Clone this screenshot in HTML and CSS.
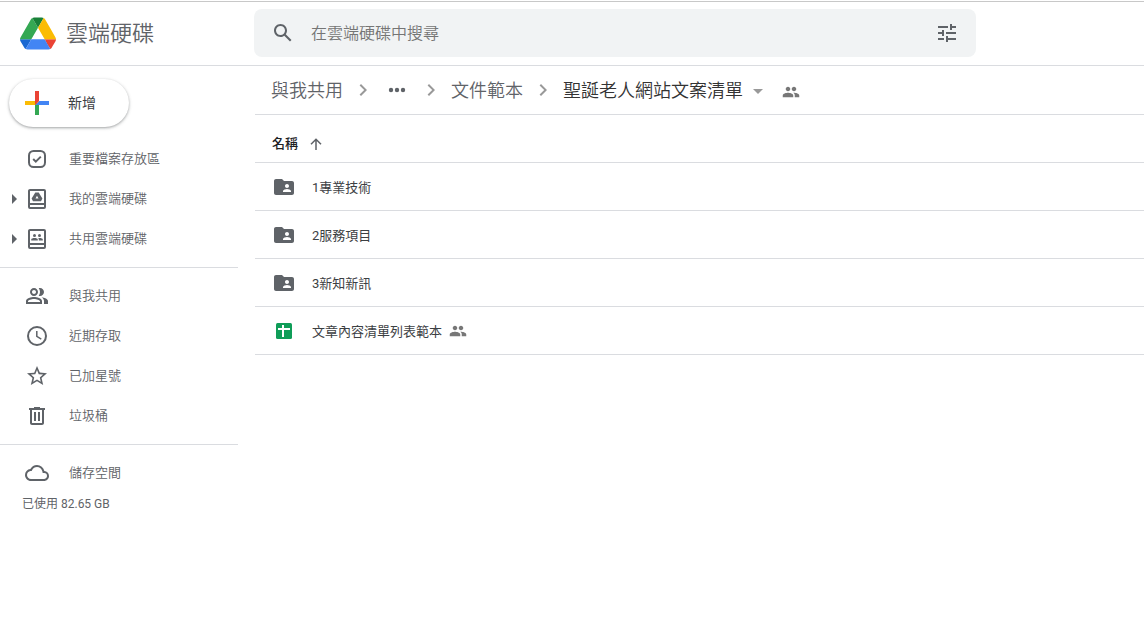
FILE: index.html
```html
<!DOCTYPE html>
<html lang="zh-Hant">
<head>
<meta charset="utf-8">
<meta name="viewport" content="width=device-width, initial-scale=1">
<title>雲端硬碟</title>
<link rel="stylesheet" href="styles.css">
</head>
<body>
<svg class="sprite" aria-hidden="true">
  <symbol id="people" viewBox="0 0 24 24"><path d="M16 11c1.66 0 2.99-1.34 2.99-3S17.66 5 16 5s-3 1.34-3 3 1.34 3 3 3zm-8 0c1.66 0 2.99-1.34 2.99-3S9.66 5 8 5 5 6.34 5 8s1.34 3 3 3zm0 2c-2.33 0-7 1.17-7 3.5V19h14v-2.5c0-2.33-4.67-3.5-7-3.5zm8 0c-.29 0-.62.02-.97.05 1.16.84 1.97 1.97 1.97 3.45V19h6v-2.5c0-2.33-4.67-3.5-7-3.5z"/></symbol>
  <symbol id="folder" viewBox="0 0 24 24"><path d="M20 6h-8l-2-2H4c-1.1 0-1.99.9-1.99 2L2 18c0 1.1.9 2 2 2h16c1.1 0 2-.9 2-2V8c0-1.1-.9-2-2-2zm-5 3c1.1 0 2 .9 2 2s-.9 2-2 2-2-.9-2-2 .9-2 2-2zm4 8h-8v-1c0-1.33 2.67-2 4-2s4 .67 4 2v1z"/></symbol>
  <symbol id="chevron" viewBox="0 0 24 24"><path d="M8.6 16.6 13.2 12 8.6 7.4 10 6l6 6-6 6z"/></symbol>
  <symbol id="caret" viewBox="0 0 6 10"><path d="M0 0l5 5-5 5z"/></symbol>
</svg>

<header class="header">
  <a class="brand" href="#">
    <svg class="brand-logo" viewBox="0 0 87.3 78" aria-hidden="true">
      <path fill="#1967d2" d="m6.6 66.85 3.85 6.65c.8 1.4 1.95 2.5 3.3 3.3l13.75-23.8h-27.5c0 1.55.4 3.1 1.2 4.5z"/>
      <path fill="#34a853" d="m43.65 25-13.75-23.8c-1.35.8-2.5 1.9-3.3 3.3l-25.4 44a9.06 9.06 0 0 0-1.2 4.5h27.5z"/>
      <path fill="#ea4335" d="m73.55 76.8c1.35-.8 2.5-1.9 3.3-3.3l1.6-2.75 7.65-13.25c.8-1.4 1.2-2.95 1.2-4.5h-27.5l5.85 11.5z"/>
      <path fill="#188038" d="m43.65 25 13.75-23.8c-1.35-.8-2.9-1.2-4.5-1.2h-18.5c-1.6 0-3.15.45-4.5 1.2z"/>
      <path fill="#4285f4" d="m59.8 53h-32.3l-13.75 23.8c1.35.8 2.9 1.2 4.5 1.2h50.8c1.6 0 3.15-.45 4.5-1.2z"/>
      <path fill="#fbbc04" d="m73.4 26.5-12.7-22c-.8-1.4-1.95-2.5-3.3-3.3l-13.75 23.8 16.15 28h27.45c0-1.55-.4-3.1-1.2-4.5z"/>
    </svg>
    <span class="brand-name">雲端硬碟</span>
  </a>
  <form class="search" role="search">
    <button class="icon-button" type="submit" aria-label="搜尋">
      <svg class="icon" viewBox="0 0 24 24"><path d="M20.49 19l-5.73-5.73C15.53 12.2 16 10.91 16 9.5 16 5.91 13.09 3 9.5 3S3 5.91 3 9.5 5.91 16 9.5 16c1.41 0 2.7-.47 3.77-1.24L19 20.49 20.49 19zM5 9.5C5 7.01 7.01 5 9.5 5S14 7.01 14 9.5 11.99 14 9.5 14 5 11.99 5 9.5z"/></svg>
    </button>
    <input class="search-input" type="text" placeholder="在雲端硬碟中搜尋" aria-label="在雲端硬碟中搜尋">
    <button class="icon-button" type="button" aria-label="搜尋選項">
      <svg class="icon" viewBox="0 0 24 24"><path d="M3 17v2h6v-2H3zM3 5v2h10V5H3zm10 16v-2h8v-2h-8v-2h-2v6h2zM7 9v2H3v2h4v2h2V9H7zm14 4v-2H11v2h10zm-6-4h2V7h4V5h-4V3h-2v6z"/></svg>
    </button>
  </form>
</header>

<div class="layout">
  <aside class="sidebar">
    <button class="new-button" type="button">
      <svg class="new-icon" viewBox="0 0 36 36" aria-hidden="true">
        <path fill="#34a853" d="M16 16v14h4V20z"/>
        <path fill="#4285f4" d="M30 16H20l-4 4h14z"/>
        <path fill="#fbbc05" d="M6 16v4h10l4-4z"/>
        <path fill="#ea4335" d="M20 16V6h-4v14z"/>
      </svg>
      <span>新增</span>
    </button>
    <nav>
      <ul class="nav-group">
        <li class="nav-item"><a class="nav-link" href="#">
          <svg class="icon" viewBox="0 0 24 24"><rect class="line" x="4" y="4" width="16" height="16" rx="4.5"/><path class="line" d="m8.2 12 2.6 2.6 5-5"/></svg>
          <span>重要檔案存放區</span></a></li>
        <li class="nav-item">
          <button class="expand" type="button" aria-label="展開我的雲端硬碟"><svg class="expand-icon"><use href="#caret"/></svg></button>
          <a class="nav-link" href="#">
          <svg class="icon" viewBox="0 0 24 24"><path fill-rule="evenodd" d="M5 2h14a2 2 0 0 1 2 2v16a2 2 0 0 1-2 2H5a2 2 0 0 1-2-2V4c0-1.100.9-2 2-2zm0 2v12h14V4zm0 14v2h14v-2z"/><path fill-rule="evenodd" d="M10.300 5.500h3.400l3.700 6-1.400 2.700H8l-1.400-2.700zM12 8.800 10.500 11.400h3z"/></svg>
          <span>我的雲端硬碟</span></a></li>
        <li class="nav-item">
          <button class="expand" type="button" aria-label="展開共用雲端硬碟"><svg class="expand-icon"><use href="#caret"/></svg></button>
          <a class="nav-link" href="#">
          <svg class="icon" viewBox="0 0 24 24"><path fill-rule="evenodd" d="M5 2h14a2 2 0 0 1 2 2v16a2 2 0 0 1-2 2H5a2 2 0 0 1-2-2V4c0-1.100.9-2 2-2zm0 2v12h14V4zm0 14v2h14v-2z"/><circle cx="9.500" cy="8.400" r="1.500"/><circle cx="14.500" cy="8.400" r="1.500"/><path d="M6.200 13.500v-1c0-2 6.600-2 6.600 0v1zM13.800 13.500v-1c0-.6-.2-1-.6-1.400 2-.4 4.600.1 4.600 1.400v1z"/></svg>
          <span>共用雲端硬碟</span></a></li>
      </ul>
      <ul class="nav-group">
        <li class="nav-item"><a class="nav-link" href="#">
          <svg class="icon" viewBox="0 0 24 24"><path d="M15 8c0-1.42-.5-2.73-1.33-3.76.42-.14.86-.24 1.33-.24 2.21 0 4 1.79 4 4s-1.79 4-4 4c-.43 0-.84-.09-1.23-.21-.03-.01-.06-.02-.1-.03A5.98 5.98 0 0 0 15 8zm1.660 5.130C18.030 14.060 19 15.320 19 17v3h4v-3c0-2.180-3.580-3.470-6.340-3.870zM9 6c-1.100 0-2 .9-2 2s.9 2 2 2 2-.9 2-2-.9-2-2-2m0 9c-2.700 0-5.800 1.290-6 2.010V18h12v-1c-.2-.71-3.300-2-6-2M9 4c2.210 0 4 1.790 4 4s-1.790 4-4 4-4-1.790-4-4 1.790-4 4-4zm0 9c2.670 0 8 1.340 8 4v3H1v-3c0-2.660 5.330-4 8-4z"/></svg>
          <span>與我共用</span></a></li>
        <li class="nav-item"><a class="nav-link" href="#">
          <svg class="icon" viewBox="0 0 24 24"><circle class="line" cx="12" cy="12" r="9"/><path class="line thin" d="M11.800 7v5.400l4.500 2.700"/></svg>
          <span>近期存取</span></a></li>
        <li class="nav-item"><a class="nav-link" href="#">
          <svg class="icon" viewBox="0 0 24 24"><path d="m22 9.240-7.190-.62L12 2 9.190 8.630 2 9.240l5.460 4.730L5.820 21 12 17.270 18.180 21l-1.630-7.030zM12 15.400l-3.760 2.270 1-4.280-3.320-2.880 4.380-.38L12 6.100l1.710 4.040 4.380.38-3.320 2.880 1 4.280z"/></svg>
          <span>已加星號</span></a></li>
        <li class="nav-item"><a class="nav-link" href="#">
          <svg class="icon" viewBox="0 0 24 24"><path d="M15 4V3H9v1H4v2h1v13c0 1.100.9 2 2 2h10c1.100 0 2-.9 2-2V6h1V4h-5zm2 15H7V6h10v13zM9 8h2v9H9zm4 0h2v9h-2z"/></svg>
          <span>垃圾桶</span></a></li>
      </ul>
      <ul class="nav-group">
        <li class="nav-item"><a class="nav-link" href="#">
          <svg class="icon" viewBox="0 0 24 24"><path d="M19.350 10.040A7.490 7.490 0 0 0 12 4C9.110 4 6.600 5.640 5.350 8.040A5.994 5.994 0 0 0 0 14c0 3.310 2.690 6 6 6h13c2.760 0 5-2.240 5-5 0-2.640-2.050-4.780-4.650-4.960zM19 18H6c-2.210 0-4-1.790-4-4 0-2.050 1.530-3.760 3.560-3.970l1.070-.11.5-.95A5.469 5.469 0 0 1 12 6c2.620 0 4.880 1.860 5.390 4.430l.3 1.500 1.530.11A2.980 2.980 0 0 1 22 15c0 1.650-1.350 3-3 3z"/></svg>
          <span>儲存空間</span></a></li>
      </ul>
    </nav>
    <p class="usage">已使用 82.65 GB</p>
  </aside>

  <main class="main">
    <nav class="crumbs" aria-label="路徑">
      <a class="crumb" href="#">與我共用</a>
      <svg class="crumb-chevron"><use href="#chevron"/></svg>
      <button class="crumb-more" type="button" aria-label="顯示路徑"><svg class="icon" viewBox="0 0 24 24"><circle cx="6" cy="12" r="2.200"/><circle cx="12" cy="12" r="2.200"/><circle cx="18" cy="12" r="2.200"/></svg></button>
      <svg class="crumb-chevron"><use href="#chevron"/></svg>
      <a class="crumb" href="#">文件範本</a>
      <svg class="crumb-chevron"><use href="#chevron"/></svg>
      <button class="crumb crumb-current" type="button">聖誕老人網站文案清單<svg class="crumb-caret" viewBox="0 0 10 5"><path d="M0 0h10L5 5z"/></svg></button>
      <button class="crumb-share" type="button" aria-label="管理共用對象"><svg class="share-icon"><use href="#people"/></svg></button>
    </nav>
    <table class="files">
      <thead>
        <tr><th scope="col"><button class="sort" type="button">名稱<svg class="sort-icon" viewBox="0 0 12 12"><path class="line thin" d="M6 12V1M1 6.200 6 1.200l5 5"/></svg></button></th></tr>
      </thead>
      <tbody>
        <tr><td><a class="file" href="#"><svg class="icon"><use href="#folder"/></svg><span class="file-name">1專業技術</span></a></td></tr>
        <tr><td><a class="file" href="#"><svg class="icon"><use href="#folder"/></svg><span class="file-name">2服務項目</span></a></td></tr>
        <tr><td><a class="file" href="#"><svg class="icon"><use href="#folder"/></svg><span class="file-name">3新知新訊</span></a></td></tr>
        <tr><td><a class="file" href="#"><svg class="icon" viewBox="0 0 24 24"><rect x="4" y="4" width="16" height="16" rx="1.500" fill="#0f9d58"/><path fill="#fff" d="M6 9h4V6h2v3h6v2h-6v7h-2v-7H6z"/></svg><span class="file-name">文章內容清單列表範本<svg class="share-icon"><use href="#people"/></svg></span></a></td></tr>
      </tbody>
    </table>
  </main>
</div>
</body>
</html>
```

FILE: styles.css
```css
* {
  box-sizing: border-box;
}

body {
  margin: 0;
  background: #fff;
  color: #5f6368;
  font-family: Roboto, "Noto Sans CJK TC", sans-serif;
  font-size: 13px;
  font-weight: 350;
  line-height: 20px;
}

a {
  color: inherit;
  text-decoration: none;
}

button {
  display: flex;
  align-items: center;
  padding: 0;
  border: 0;
  background: none;
  color: inherit;
  font: inherit;
  cursor: pointer;
}

svg {
  display: block;
  flex: none;
  fill: currentColor;
}

.sprite {
  display: none;
}

.icon {
  width: 24px;
  height: 24px;
}

.line {
  fill: none;
  stroke: currentColor;
  stroke-width: 2;
}

.thin {
  stroke-width: 1.5;
}

.header {
  display: flex;
  align-items: center;
  margin-top: 1px;
  border-top: 1px solid #c8c8c8;
  border-bottom: 1px solid #dadce0;
  padding: 7px 0 8px;
}

.brand {
  display: flex;
  flex: none;
  align-items: center;
  gap: 10px;
  width: 254px;
  padding-left: 20px;
}

.brand-logo {
  width: 36px;
  height: 33px;
}

.brand-name {
  padding-top: 2px;
  font-size: 22px;
  line-height: 32px;
}

.search {
  display: flex;
  flex: 1;
  align-items: center;
  max-width: 722px;
  height: 48px;
  padding: 0 17px;
  border-radius: 8px;
  background: #f1f3f4;
}

.search-input {
  flex: 1;
  min-width: 0;
  margin: 0 16px;
  padding: 2px 0 0;
  border: 0;
  outline: 0;
  background: none;
  color: #5f6368;
  font: inherit;
  font-size: 16px;
}

.search-input::placeholder {
  color: #757575;
  opacity: 1;
}

.layout {
  display: flex;
}

.sidebar {
  flex: none;
  width: 238px;
  margin-right: 17px;
  padding-top: 13px;
}

.new-button {
  gap: 13px;
  width: 120px;
  height: 48px;
  margin: 0 0 12px 9px;
  padding-left: 10px;
  border-radius: 24px;
  box-shadow: 0 1px 2px rgba(60, 64, 67, 0.3), 0 1px 3px 1px rgba(60, 64, 67, 0.15);
  color: #3c4043;
  font-size: 14px;
  font-weight: 400;
}

.new-icon {
  width: 36px;
  height: 36px;
}

.nav-group {
  margin: 0;
  padding: 0;
  list-style: none;
}

.nav-group + .nav-group {
  margin-top: 8px;
  padding-top: 8px;
  border-top: 1px solid #dadce0;
}

.nav-item {
  display: flex;
  align-items: center;
  justify-content: flex-end;
  height: 40px;
}

.nav-link {
  display: flex;
  align-items: center;
  gap: 20px;
  width: 213px;
}

.nav-link span {
  padding-bottom: 1px;
}

.expand {
  width: 13px;
  height: 24px;
}

.expand-icon {
  width: 6px;
  height: 10px;
}

.usage {
  margin: 1px 0 0 22px;
  font-size: 12px;
  font-weight: 400;
}

.main {
  flex: 1;
  min-width: 0;
}

.crumbs {
  display: flex;
  align-items: center;
  gap: 8px;
  height: 49px;
  padding-left: 16px;
  border-bottom: 1px solid #dadce0;
}

.crumb {
  flex: none;
  padding-top: 2px;
  font-size: 18px;
  line-height: 24px;
}

.crumb-current {
  gap: 10px;
  color: #333;
}

.crumb-chevron {
  width: 24px;
  height: 24px;
  color: #999;
}

.crumb-more {
  justify-content: center;
  width: 28px;
}

.crumb-caret {
  width: 10px;
  height: 5px;
  color: #999;
}

.crumb-share {
  margin-left: 11px;
  padding-top: 3px;
}

.share-icon {
  width: 18px;
  height: 18px;
  color: #777;
}

.files {
  width: 100%;
  border-collapse: separate;
  border-spacing: 0;
  color: #202124;
}

.files th,
.files td {
  height: 48px;
  padding: 0 0 0 17px;
  border-bottom: 1px solid #dadce0;
  text-align: left;
}

.files th {
  padding-top: 10px;
}

.sort {
  gap: 12px;
  font-weight: 500;
}

.sort-icon {
  width: 12px;
  height: 12px;
  color: #5f6368;
}

.file {
  display: flex;
  align-items: center;
  gap: 16px;
}

.file .icon {
  color: #5f6368;
}

.file-name {
  display: flex;
  align-items: flex-start;
  gap: 7px;
  padding-top: 2px;
  color: #3c4043;
  font-weight: 400;
}
```
